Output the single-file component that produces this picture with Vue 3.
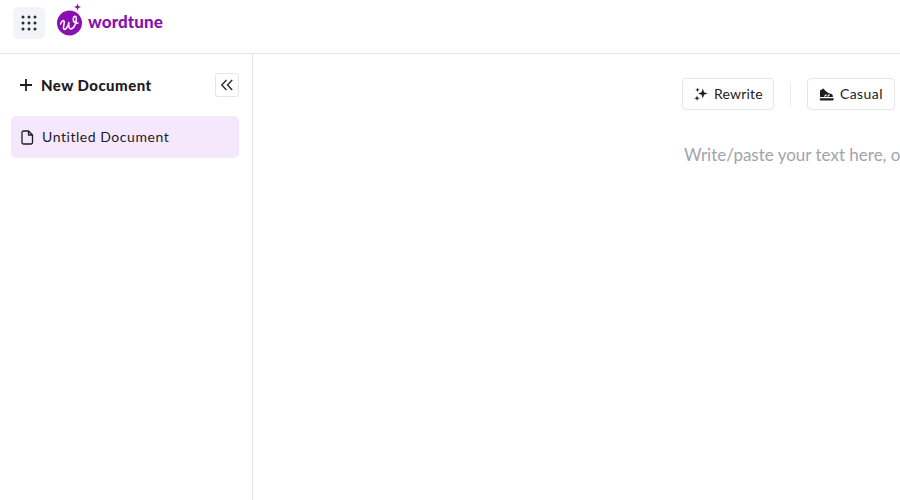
<script setup>
const dots = [0, 1, 2].flatMap((r) => [0, 1, 2].map((c) => ({ cx: 3 + c * 6, cy: 3 + r * 6 })))
</script>

<template>
  <div class="app">
    <header class="topbar">
      <button class="grid-btn" aria-label="Apps">
        <svg width="18" height="18" viewBox="0 0 18 18">
          <circle v-for="(d, i) in dots" :key="i" :cx="d.cx" :cy="d.cy" r="1.5" fill="#2b2b36" />
        </svg>
      </button>
      <div class="brand">
        <svg class="logo" width="28" height="34" viewBox="0 0 28 34">
          <circle cx="13.500" cy="21" r="12.500" fill="#8a0fb0" />
          <path d="M21.500 1.500l.9 2.600 2.600.9-2.600.9-.9 2.600-.9-2.600-2.600-.9 2.600-.9z" fill="#8a0fb0" />
          <path d="M4.500 22c1-3.200 3.200-4.400 3.700-2.500.6 2.300-1.800 6-.4 7.500 1.500 1.500 4.300-1.800 5-6.500M12.800 20.500c-.4 3.500.3 6.500 2.200 6.400 3-.2 5.800-6.200 5.300-11-.2-2.300-2.500-2-3 .5-.5 2.700 1.200 5 4.700 4.700" fill="none" stroke="#fff" stroke-width="1.500" stroke-linecap="round" />
        </svg>
        <span class="wordmark">wordtune</span>
      </div>
    </header>

    <div class="body">
      <aside class="sidebar">
        <div class="side-head">
          <button class="new-doc">
            <svg width="14" height="14" viewBox="0 0 14 14">
              <path d="M7 1v12M1 7h12" stroke="#1f1b24" stroke-width="1.800" fill="none" />
            </svg>
            <span>New Document</span>
          </button>
          <button class="collapse" aria-label="Collapse">
            <svg width="14" height="14" viewBox="0 0 14 14">
              <path d="M6.500 2L1.800 7l4.700 5M12.200 2L7.500 7l4.700 5" stroke="#2b2b36" stroke-width="1.400" fill="none" />
            </svg>
          </button>
        </div>
        <div class="doc-item">
          <svg width="13" height="15" viewBox="0 0 13 15">
            <path d="M2.500 1h5l4 4v7.500a1.500 1.500 0 0 1-1.500 1.500H2.500A1.500 1.500 0 0 1 1 12.500v-10A1.500 1.500 0 0 1 2.500 1zM7.500 1v4h4" stroke="#1f1b24" stroke-width="1.300" fill="none" stroke-linejoin="round" />
          </svg>
          <span class="doc-title">Untitled Document</span>
        </div>
      </aside>

      <main class="editor">
        <div class="column">
          <div class="toolbar">
            <button class="tool">
              <svg width="14" height="14" viewBox="0 0 14 14" fill="#1f1b24">
                <path d="M8.800 1.500l1.200 3.800 3.500 1.200-3.500 1.200-1.200 3.800-1.200-3.800-3.500-1.200 3.500-1.200z" />
                <path d="M3.500 0.500l.6 1.700 1.700.6-1.700.6-.6 1.700-.6-1.700-1.700-.6 1.700-.6z" />
                <path d="M3 8.500l.7 2.100 2.100.7-2.100.7L3 14l-.7-2-2.100-.7 2.100-.7z" />
              </svg>
              <span class="label">Rewrite</span>
            </button>
            <div class="divider"></div>
            <button class="tool wide">
              <svg width="15" height="13" viewBox="0 0 15 13">
                <path d="M1 2.500L4.500 0.500l1.800 2.200 3 2.300 4 1.300.7 2.700H1z" fill="#1f1b24" />
                <path d="M0.800 10.200h13.800v1.300a1 1 0 0 1-1 1H1.800a1 1 0 0 1-1-1z" fill="#1f1b24" />
                <path d="M5.500 8.500l2-2M8.500 8.500l2-2" stroke="#fff" stroke-width="1.100" fill="none" />
              </svg>
              <span class="label">Casual</span>
            </button>
          </div>
          <p class="placeholder">Write/paste your text here, or start from a template</p>
        </div>
      </main>
    </div>
  </div>
</template>

<style>
html, body { margin: 0; overflow: hidden; background: #fff; }
</style>

<style scoped>
.app {
  width: 900px;
  height: 500px;
  display: flex;
  flex-direction: column;
  overflow: hidden;
  font-family: Lato, "Open Sans", sans-serif;
  color: #1f1b24;
}
button { font: inherit; color: inherit; background: none; padding: 0; }
.topbar {
  height: 53px;
  border-bottom: 1px solid #e6e6ea;
  display: flex;
  align-items: flex-start;
  padding-left: 13px;
  flex: none;
}
.grid-btn {
  width: 32px;
  height: 32px;
  margin-top: 7px;
  border: 0;
  border-radius: 5px;
  background: #f3f4f8;
  display: flex;
  align-items: center;
  justify-content: center;
  padding: 0;
}
.brand {
  display: flex;
  align-items: center;
  margin-left: 11px;
  margin-top: 2px;
}
.wordmark {
  font-size: 17px;
  font-weight: 900;
  color: #8a0fb0;
  margin-left: 4px;
  margin-top: 5px;
  letter-spacing: 0.1px;
}
.body { flex: 1; display: flex; min-height: 0; }
.sidebar {
  flex: none;
  border-right: 1px solid #e6e6ea;
  padding: 19px 13px 0 11px;
  width: 228px;
}
.side-head {
  height: 24px;
  display: flex;
  align-items: center;
  justify-content: space-between;
  margin-bottom: 19px;
}
.new-doc {
  border: 0;
  display: flex;
  align-items: center;
  gap: 8px;
  padding-left: 8px;
  font-size: 15px;
  font-weight: 900;
  letter-spacing: 0.45px;
}
.collapse {
  width: 24px;
  height: 24px;
  border: 1px solid #e6e6ea;
  border-radius: 3px;
  box-sizing: border-box;
  display: flex;
  align-items: center;
  justify-content: center;
}
.doc-item {
  height: 42px;
  background: #f5e8fd;
  border-radius: 5px;
  display: flex;
  align-items: center;
  gap: 8px;
  padding-left: 10px;
  font-size: 14px;
  letter-spacing: 0.55px;
}
.doc-title { margin-bottom: 2px; }
.editor { flex: 1; min-width: 0; overflow: hidden; padding-left: 429px; }
.column { width: 800px; padding-top: 24px; }
.toolbar { display: flex; align-items: center; }
.tool {
  height: 32px;
  box-sizing: border-box;
  border: 1px solid #e6e6ea;
  border-radius: 4px;
  display: flex;
  align-items: center;
  gap: 6px;
  padding: 0 10px 0 11px;
  font-size: 14px;
  letter-spacing: 0.2px;
  white-space: nowrap;
}
.label { margin-bottom: 2px; }
.tool.wide { letter-spacing: 0.45px; padding-right: 11px; }
.divider { width: 1px; height: 24px; background: #ececf0; margin: 0 16px; }
.placeholder {
  margin: 33px 0 0 2px;
  font-size: 17px;
  line-height: 24px;
  color: #a3a3ab;
  white-space: nowrap;
}
</style>
